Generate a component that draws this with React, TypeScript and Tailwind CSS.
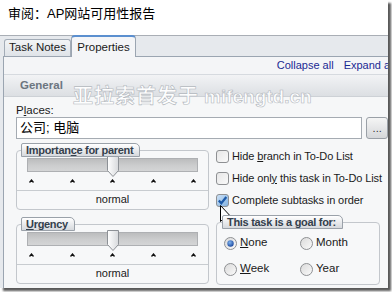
import React from "react";

const ui = "font-['Liberation_Sans','Noto_Sans_CJK_SC',sans-serif]";

function Caret() {
  return (
    <svg width="5" height="4" viewBox="0 0 5 4">
      <path d="M0.5 3.5 L2.5 1 L4.5 3.5" fill="none" stroke="#111" strokeWidth="1.3" />
    </svg>
  );
}

function Legend({ children, ml = "ml-[5px]" }: { children: React.ReactNode; ml?: string }) {
  return (
    <div
      className={`relative z-10 ${ml} flex h-[14px] w-fit items-center rounded-tl-[2px] rounded-tr-[5px] border border-[#9aa1a9] bg-gradient-to-b from-[#ffffff] to-[#d6d9dd] pl-[4px] pr-[6px] text-[11px] leading-none font-bold tracking-[-0.3px] whitespace-nowrap text-[#34404c]`}
    >
      <span>{children}</span>
    </div>
  );
}

function SliderGroup({ label }: { label: React.ReactNode }) {
  return (
    <div className="flex flex-col">
      <Legend>{label}</Legend>
      <div className="-mt-[7px] flex flex-col rounded-[4px] border border-[#c3c7cc] bg-[#f7f8f9] pt-[7px]">
        <div className="relative mx-[10px] h-[14px] border border-[#aeb0b3] bg-gradient-to-b from-[#bcbdbe] via-[#cbcccd] to-[#d4d5d6]">
          <svg
            className="absolute -top-[3px] left-1/2 -translate-x-1/2"
            width="12"
            height="21"
            viewBox="0 0 12 21"
          >
            <defs>
              <linearGradient id="th" x1="0" x2="1" y1="0" y2="0">
                <stop offset="0" stopColor="#ffffff" />
                <stop offset="1" stopColor="#d7d9dc" />
              </linearGradient>
            </defs>
            <path d="M0.5 0.5 H11.5 V14.5 L6 20.5 L0.5 14.5 Z" fill="url(#th)" stroke="#8d9196" />
          </svg>
        </div>
        <div className="flex h-[18px] items-center justify-between px-[12px]">
          <Caret />
          <Caret />
          <Caret />
          <Caret />
          <Caret />
        </div>
        <div className="flex h-[19px] items-center justify-center border-t border-[#c8ccd0] pb-[1px] text-[11px] text-[#1a1a1a]">
          normal
        </div>
      </div>
    </div>
  );
}

function CheckBox({ checked = false }: { checked?: boolean }) {
  return (
    <svg width="13" height="13" viewBox="0 0 13 13" className="shrink-0">
      <defs>
        <linearGradient id={checked ? "cbc" : "cb"} x1="0" x2="1" y1="0" y2="1">
          <stop offset="0" stopColor={checked ? "#cfe3f7" : "#e6e6e6"} />
          <stop offset="1" stopColor={checked ? "#7fb0e0" : "#fafafa"} />
        </linearGradient>
      </defs>
      <rect x="0.5" y="0.5" width="12" height="12" rx="2.5" fill={`url(#${checked ? "cbc" : "cb"})`} stroke="#8e9093" />
      {checked && <path d="M2.8 6.5 L5.3 9.3 L10.3 3" fill="none" stroke="#1d5aa8" strokeWidth="2.2" />}
    </svg>
  );
}

function Radio({ on = false }: { on?: boolean }) {
  return (
    <svg width="13" height="13" viewBox="0 0 13 13" className="shrink-0">
      <defs>
        <linearGradient id="rg" x1="0" x2="1" y1="0" y2="1">
          <stop offset="0" stopColor="#d9d9d9" />
          <stop offset="1" stopColor="#fbfbfb" />
        </linearGradient>
        <radialGradient id="rd" cx="0.4" cy="0.35" r="0.7">
          <stop offset="0" stopColor="#7fb4ee" />
          <stop offset="1" stopColor="#17439b" />
        </radialGradient>
      </defs>
      <circle cx="6.5" cy="6.5" r="6" fill="url(#rg)" stroke="#8e9093" />
      {on && <circle cx="6.5" cy="6.5" r="3.2" fill="url(#rd)" />}
    </svg>
  );
}

function Check({ checked, children }: { checked?: boolean; children: React.ReactNode }) {
  return (
    <div className="flex h-[22px] items-center gap-[3px] whitespace-nowrap text-[11px] tracking-[-0.1px] text-[#1a1a1a]">
      <CheckBox checked={checked} />
      <span>{children}</span>
    </div>
  );
}

function RadioItem({ on, children }: { on?: boolean; children: React.ReactNode }) {
  return (
    <div className="flex w-[76px] items-center gap-[3px] text-[11.5px] text-[#1a1a1a]">
      <Radio on={on} />
      <span>{children}</span>
    </div>
  );
}

export default function App() {
  return (
    <div className={`h-[292px] w-[392px] overflow-hidden bg-white ${ui}`}>
      <div className="relative flex h-[288px] w-[388px] flex-col bg-[#e6e9ed] shadow-[3px_3px_2px_rgba(0,0,0,0.65)]">
        {/* title */}
        <div className="h-[36px] shrink-0 border-b border-[#a9aeb5] bg-white pl-[8px] pt-[6px] text-[13px] leading-[16px] text-black">
          审阅：AP网站可用性报告
        </div>

        <div className="ml-[3px] flex min-h-0 flex-1 flex-col">
          {/* tabs */}
          <div className="flex h-[21px] shrink-0 items-end border-b border-[#9ba5b1] pl-[1px]">
            <div className="flex h-[17px] w-[67px] items-center justify-center rounded-t-[3px] border border-b-0 border-[#a3acb7] bg-gradient-to-b from-[#f2f4f6] to-[#dfe3e8] text-[11.5px] text-[#1a1a1a]">
              Task Notes
            </div>
            <div className="relative -mb-px flex h-[22px] w-[65px] items-start justify-center rounded-t-[4px] border border-b-0 border-t-2 border-[#9ba5b1] border-t-[#5b8fcf] bg-[#f4f5f7] pt-[2px] text-[11.5px] text-[#1a1a1a]">
              Properties
            </div>
          </div>

          {/* panel */}
          <div className="relative flex min-h-0 flex-1 flex-col overflow-hidden border-l border-[#9ba5b1] bg-[#f6f7f8]">
            <div className="flex h-[18px] shrink-0 items-center justify-end gap-[10px] border-b border-[#d6dadf] bg-[#f4f5f7] text-[11px] whitespace-nowrap text-[#1b2a93]">
              <span>Collapse all</span>
              <span className="-mr-[7px]">Expand all</span>
            </div>
            <div className="flex h-[22px] shrink-0 items-center border-b border-[#cdd1d6] bg-gradient-to-b from-[#f2f3f5] to-[#dcdfe3] pl-[16px] text-[11.5px] font-bold text-[#6c7580]">
              General
            </div>

            <div className="flex flex-col pl-[12px]">
              <div className="mt-[6px] h-[14px] text-[11.5px] leading-[14px] text-[#1a1a1a]">
                P<span className="underline">l</span>aces:
              </div>
              <div className="flex h-[22px] items-stretch gap-[4px]">
                <div className="flex w-[353px] items-center border border-[#a5abb2] bg-white pl-[3px] text-[13px] text-black">
                  公司; 电脑
                </div>
                <div className="flex w-[22px] items-center justify-center rounded-[3px] border border-[#9aa0a7] bg-gradient-to-b from-[#f5f5f5] to-[#d5d7da] text-[11px] leading-none text-[#333]">
                  ...
                </div>
              </div>

              <div className="mt-[4px] flex gap-[7px]">
                <div className="flex w-[193px] flex-col gap-[7px]">
                  <SliderGroup
                    label={
                      <>
                        Importan<span className="underline">c</span>e for parent
                      </>
                    }
                  />
                  <SliderGroup
                    label={
                      <>
                        <span className="underline">U</span>rgency
                      </>
                    }
                  />
                </div>

                <div className="flex w-[164px] flex-col pt-[2px]">
                  <Check>
                    Hide <span className="underline">b</span>ranch in To-Do List
                  </Check>
                  <Check>
                    Hide onl<span className="underline">y</span> this task in To-Do List
                  </Check>
                  <Check checked>Complete subtasks in order</Check>
                  <div className="mt-[4px] flex flex-col">
                    <Legend ml="ml-[6px]">
                      This task is a <span className="underline">g</span>oal for:
                    </Legend>
                    <div className="-mt-[7px] flex h-[63px] flex-col gap-[6px] rounded-[4px] border border-[#c3c7cc] bg-[#f7f8f9] pl-[7px] pt-[10px]">
                      <div className="flex h-[20px] items-center">
                        <RadioItem on>
                          <span className="underline">N</span>one
                        </RadioItem>
                        <RadioItem>Month</RadioItem>
                      </div>
                      <div className="flex h-[20px] items-center">
                        <RadioItem>
                          <span className="underline">W</span>eek
                        </RadioItem>
                        <RadioItem>Year</RadioItem>
                      </div>
                    </div>
                  </div>
                </div>
              </div>
            </div>
          </div>
        </div>

        {/* watermark */}
        <div className="pointer-events-none absolute left-[73px] top-[81px] flex items-baseline gap-[5px] whitespace-nowrap text-[20px] font-bold text-[rgba(255,255,255,0.95)] [-webkit-text-stroke:0.6px_#b3b8be]">
          <span className="tracking-[1px]">亚拉索首发于</span>
          <span className="text-[19px]">mifengtd.cn</span>
        </div>

        {/* mouse cursor */}
        <svg className="pointer-events-none absolute left-[220px] top-[205px]" width="13" height="21" viewBox="0 0 13 21">
          <path d="M0.5 0.5 L0.5 16.5 L4.2 13 L6.8 19 L9 18 L6.5 12.3 L11.5 12.3 Z" fill="#fff" stroke="#000" strokeWidth="1" />
        </svg>
      </div>
    </div>
  );
}
